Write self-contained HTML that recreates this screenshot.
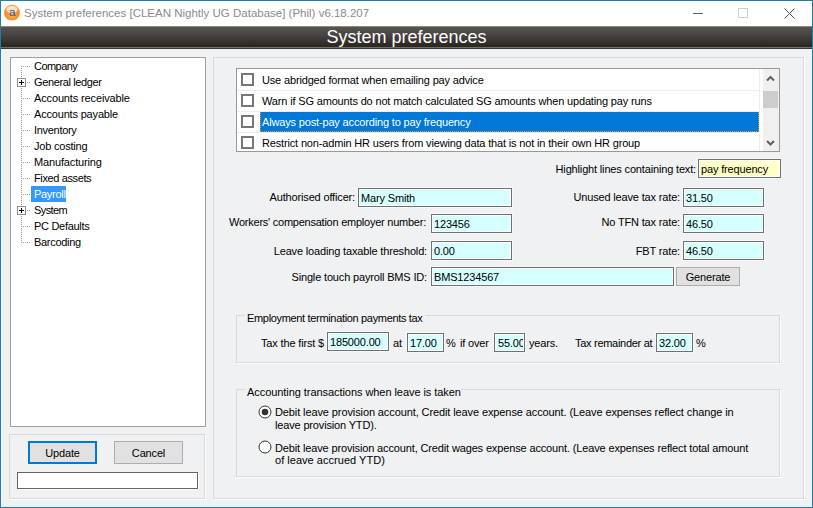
<!DOCTYPE html>
<html><head><meta charset="utf-8">
<style>
*{box-sizing:border-box;margin:0;padding:0}
html,body{width:813px;height:508px;overflow:hidden;background:#eff1f2}
body{position:relative;font-family:"Liberation Sans",sans-serif}
.a{position:absolute}
.t{position:absolute;font-size:11px;line-height:13px;letter-spacing:-0.16px;white-space:nowrap;color:#000}
.r{text-align:right}
.win{position:absolute;left:0;top:0;width:813px;height:508px;border:1px solid #1f7fa6;background:#eff1f2}
.title{position:absolute;left:1px;top:1px;width:811px;height:25px;background:#fff}
.bar{position:absolute;left:1px;top:26px;width:811px;height:23px;
 background:linear-gradient(to bottom,#8f8a78 0px,#8f8a78 1px,#57534f 1px,#4a4643 8px,#2b2725 20px,#2b2725 21px,#77725c 21px,#77725c 22px,#3a3835 22px)}
.bartitle{position:absolute;left:0;top:27px;width:813px;text-align:center;color:#fff;font-size:18px;line-height:20px}
.box{position:absolute;background:#fff;border:1px solid #a0a0a0}
.etch{position:absolute;border:1px solid #d9d9d9;box-shadow:1px 1px 0 #fff}
.inp{position:absolute;background:#d6ffff;border:1px solid #707070;box-shadow:inset 0 0 0 1px #fff,0 0 0 1px rgba(255,255,255,0.5)}
.btn{position:absolute;background:#e1e1e1;border:1px solid #adadad}
.cb{position:absolute;width:13px;height:13px;border:2px solid #777;background:#fff}
.sep{position:absolute;height:1px;background:#ededed}
.dv{position:absolute;width:1px;background-image:linear-gradient(to bottom,#a0a0a0 50%,transparent 50%);background-size:1px 2px}
.dh{position:absolute;height:1px;background-image:linear-gradient(to right,#a0a0a0 50%,transparent 50%);background-size:2px 1px}
.pl{position:absolute;width:9px;height:9px;border:1px solid #919191;background:#fff}
.pl:before{content:"";position:absolute;left:1px;top:3px;width:5px;height:1px;background:#000}
.pl:after{content:"";position:absolute;left:3px;top:1px;width:1px;height:5px;background:#000}
</style></head><body>
<div class="win"></div>
<div class="title"></div>
<!-- app icon -->
<svg class="a" style="left:4px;top:4px" width="17" height="17" viewBox="0 0 17 17">
 <defs><radialGradient id="og" cx="0.5" cy="0.62" r="0.55"><stop offset="0" stop-color="#ffb45a"/><stop offset="0.75" stop-color="#fb8a1e"/><stop offset="1" stop-color="#f7a04a"/></radialGradient>
 <linearGradient id="hl" x1="0" y1="0" x2="0" y2="1"><stop offset="0" stop-color="#fff4e2"/><stop offset="1" stop-color="#fde0b8"/></linearGradient></defs>
 <circle cx="8" cy="8.7" r="7.9" fill="url(#og)"/>
 <ellipse cx="8" cy="5.6" rx="5.6" ry="3.6" fill="url(#hl)" opacity="0.9"/>
 <text x="8.2" y="12.4" text-anchor="middle" font-family="Liberation Sans" font-size="11.5" fill="#2753a3">a</text>
</svg>
<div class="t" style="left:24px;top:7px;font-size:11.5px;letter-spacing:0;color:#8a8a8a">System preferences [CLEAN Nightly UG Database] (Phil) v6.18.207</div>
<!-- controls -->
<div class="a" style="left:693px;top:13px;width:10px;height:1px;background:#666"></div>
<div class="a" style="left:738px;top:8px;width:10px;height:10px;border:1px solid #cfcfcf"></div>
<svg class="a" style="left:784px;top:8px" width="11" height="11" viewBox="0 0 11 11"><path d="M0.5 0.5L10.5 10.5M10.5 0.5L0.5 10.5" stroke="#555" stroke-width="1"/></svg>

<div class="bar"></div>
<div class="bartitle">System preferences</div>

<!-- tree -->
<div class="box" style="left:10px;top:57px;width:196px;height:370px"></div>
<div class="dv" style="left:21px;top:66px;height:177px"></div>
<div class="dh" style="left:23px;top:66px;width:7px"></div>
<div class="dh" style="left:23px;top:82px;width:7px"></div>
<div class="dh" style="left:23px;top:98px;width:7px"></div>
<div class="dh" style="left:23px;top:114px;width:7px"></div>
<div class="dh" style="left:23px;top:130px;width:7px"></div>
<div class="dh" style="left:23px;top:146px;width:7px"></div>
<div class="dh" style="left:23px;top:162px;width:7px"></div>
<div class="dh" style="left:23px;top:178px;width:7px"></div>
<div class="dh" style="left:23px;top:194px;width:7px"></div>
<div class="dh" style="left:23px;top:210px;width:7px"></div>
<div class="dh" style="left:23px;top:226px;width:7px"></div>
<div class="dh" style="left:23px;top:242px;width:7px"></div>
<div class="pl" style="left:17px;top:78px"></div>
<div class="pl" style="left:17px;top:206px"></div>
<div class="a" style="left:31px;top:186px;width:35px;height:16px;background:#3399ff"></div>
<div class="t" style="left:34px;letter-spacing:-0.55px;top:60px">Company</div>
<div class="t" style="left:34px;letter-spacing:-0.37px;top:76px">General ledger</div>
<div class="t" style="left:34px;letter-spacing:-0.14px;top:92px">Accounts receivable</div>
<div class="t" style="left:34px;letter-spacing:-0.18px;top:108px">Accounts payable</div>
<div class="t" style="left:34px;letter-spacing:-0.3px;top:124px">Inventory</div>
<div class="t" style="left:34px;letter-spacing:-0.21px;top:140px">Job costing</div>
<div class="t" style="left:34px;letter-spacing:-0.15px;top:156px">Manufacturing</div>
<div class="t" style="left:34px;letter-spacing:-0.38px;top:172px">Fixed assets</div>
<div class="t" style="left:34px;letter-spacing:-0.3px;top:188px;color:#fff">Payroll</div>
<div class="t" style="left:34px;letter-spacing:-0.6px;top:204px">System</div>
<div class="t" style="left:34px;letter-spacing:-0.3px;top:220px">PC Defaults</div>
<div class="t" style="left:34px;letter-spacing:-0.3px;top:236px">Barcoding</div>

<!-- left bottom panel -->
<div class="etch" style="left:9px;top:434px;width:196px;height:65px"></div>
<div class="btn" style="left:28px;top:441px;width:69px;height:23px;border:2px solid #0078d7"></div>
<div class="t" style="left:28px;top:447px;width:69px;text-align:center">Update</div>
<div class="btn" style="left:114px;top:441px;width:69px;height:23px"></div>
<div class="t" style="left:114px;top:447px;width:69px;text-align:center">Cancel</div>
<div class="a" style="left:17px;top:472px;width:181px;height:17px;background:#fff;border:1px solid #646464;box-shadow:1px 1px 0 #fff"></div>

<!-- right panel -->
<div class="etch" style="left:213px;top:57px;width:591px;height:442px"></div>

<!-- checklist -->
<div class="box" style="left:236px;top:68px;width:544px;height:84px;border-color:#999"></div>
<div class="sep" style="left:237px;top:90px;width:522px"></div>
<div class="sep" style="left:237px;top:111px;width:522px"></div>
<div class="sep" style="left:237px;top:132px;width:522px"></div>
<div class="a" style="left:759px;top:69px;width:1px;height:82px;background:#ededed"></div>
<div class="a" style="left:763px;top:69px;width:16px;height:82px;background:#f0f0f0"></div>
<div class="a" style="left:763px;top:91px;width:15px;height:17px;background:#cdcdcd"></div>
<svg class="a" style="left:763px;top:69px" width="16" height="82" viewBox="0 0 16 82"><path d="M4 11.5L7.5 8L11 11.5M4 72L7.5 75.5L11 72" fill="none" stroke="#606060" stroke-width="2"/></svg>
<div class="a" style="left:260px;top:112px;width:499px;height:20px;background:#0078d7;border:1px dotted #f5902a;border-top:1px solid #0078d7"></div>
<div class="cb" style="left:241px;top:73px"></div>
<div class="cb" style="left:241px;top:94px"></div>
<div class="cb" style="left:241px;top:115px"></div>
<div class="cb" style="left:241px;top:136px"></div>
<div class="t" style="left:262px;top:74px">Use abridged format when emailing pay advice</div>
<div class="t" style="left:262px;top:95px">Warn if SG amounts do not match calculated SG amounts when updating pay runs</div>
<div class="t" style="left:262px;top:116px;color:#fff">Always post-pay according to pay frequency</div>
<div class="t" style="left:262px;top:137px">Restrict non-admin HR users from viewing data that is not in their own HR group</div>

<div class="t r" style="right:117px;top:163px">Highlight lines containing text:</div>
<div class="inp" style="left:698px;top:159px;width:83px;height:19px;background:#ffffc8"></div>
<div class="t" style="left:701px;top:163px">pay frequency</div>

<!-- fields -->
<div class="t r" style="right:458px;top:191px">Authorised officer:</div>
<div class="inp" style="left:358px;top:188px;width:154px;height:19px"></div>
<div class="t" style="left:361px;top:192px">Mary Smith</div>
<div class="t r" style="right:387px;top:216px;letter-spacing:-0.24px">Workers' compensation employer number:</div>
<div class="inp" style="left:431px;top:214px;width:81px;height:19px"></div>
<div class="t" style="left:434px;top:218px">123456</div>
<div class="t r" style="right:386px;top:245px">Leave loading taxable threshold:</div>
<div class="inp" style="left:431px;top:241px;width:81px;height:19px"></div>
<div class="t" style="left:434px;top:245px">0.00</div>
<div class="t r" style="right:386px;top:271px">Single touch payroll BMS ID:</div>
<div class="inp" style="left:431px;top:267px;width:243px;height:19px"></div>
<div class="t" style="left:434px;top:271px">BMS1234567</div>
<div class="btn" style="left:676px;top:267px;width:64px;height:19px"></div>
<div class="t" style="left:676px;top:271px;width:64px;text-align:center">Generate</div>

<div class="t r" style="right:133px;top:191px">Unused leave tax rate:</div>
<div class="inp" style="left:683px;top:188px;width:81px;height:19px"></div>
<div class="t" style="left:686px;top:192px">31.50</div>
<div class="t r" style="right:133px;top:216px">No TFN tax rate:</div>
<div class="inp" style="left:683px;top:214px;width:81px;height:19px"></div>
<div class="t" style="left:686px;top:218px">46.50</div>
<div class="t r" style="right:133px;top:245px">FBT rate:</div>
<div class="inp" style="left:683px;top:241px;width:81px;height:19px"></div>
<div class="t" style="left:686px;top:245px">46.50</div>

<!-- ETP group -->
<div class="etch" style="left:236px;top:315px;width:544px;height:48px"></div>
<div class="a" style="left:245px;top:312px;width:180px;height:6px;background:#eff1f2"></div>
<div class="t" style="left:247px;top:312px;letter-spacing:-0.33px">Employment termination payments tax</div>
<div class="t" style="left:261px;top:337px">Tax the first $</div>
<div class="inp" style="left:327px;top:332px;width:62px;height:19px"></div>
<div class="t" style="left:330px;top:336px">185000.00</div>
<div class="t" style="left:393px;top:337px">at</div>
<div class="inp" style="left:407px;top:333px;width:37px;height:19px"></div>
<div class="t" style="left:410px;top:337px">17.00</div>
<div class="t" style="left:446px;top:337px">%</div>
<div class="t" style="left:460px;top:337px">if over</div>
<div class="inp" style="left:494px;top:333px;width:31px;height:19px"></div><div class="a" style="left:496px;top:335px;width:27px;height:15px;overflow:hidden"><div class="t" style="left:2px;top:2px">55.00</div></div>
<div class="t" style="left:529px;top:337px">years.</div>
<div class="t" style="left:575px;top:337px;letter-spacing:-0.29px">Tax remainder at</div>
<div class="inp" style="left:656px;top:333px;width:37px;height:19px"></div>
<div class="t" style="left:659px;top:337px">32.00</div>
<div class="t" style="left:696px;top:337px">%</div>

<!-- Accounting group -->
<div class="etch" style="left:236px;top:389px;width:544px;height:88px"></div>
<div class="a" style="left:245px;top:386px;width:216px;height:6px;background:#eff1f2"></div>
<div class="t" style="left:247px;top:386px;letter-spacing:-0.06px">Accounting transactions when leave is taken</div>
<svg class="a" style="left:258px;top:405px" width="14" height="14" viewBox="0 0 14 14"><circle cx="7" cy="7" r="6" fill="#fff" stroke="#333" stroke-width="1"/><circle cx="7" cy="7" r="3.3" fill="#333"/></svg>
<div class="t" style="left:275px;top:406px;letter-spacing:-0.105px">Debit leave provision account, Credit leave expense account. (Leave expenses reflect change in</div>
<div class="t" style="left:275px;top:419px">leave provision YTD).</div>
<svg class="a" style="left:258px;top:440px" width="14" height="14" viewBox="0 0 14 14"><circle cx="7" cy="7" r="6" fill="#fff" stroke="#333" stroke-width="1"/></svg>
<div class="t" style="left:275px;top:442px;letter-spacing:-0.14px">Debit leave provision account, Credit wages expense account. (Leave expenses reflect total amount</div>
<div class="t" style="left:275px;top:454px;letter-spacing:0.03px">of leave accrued YTD)</div>

</body></html>
